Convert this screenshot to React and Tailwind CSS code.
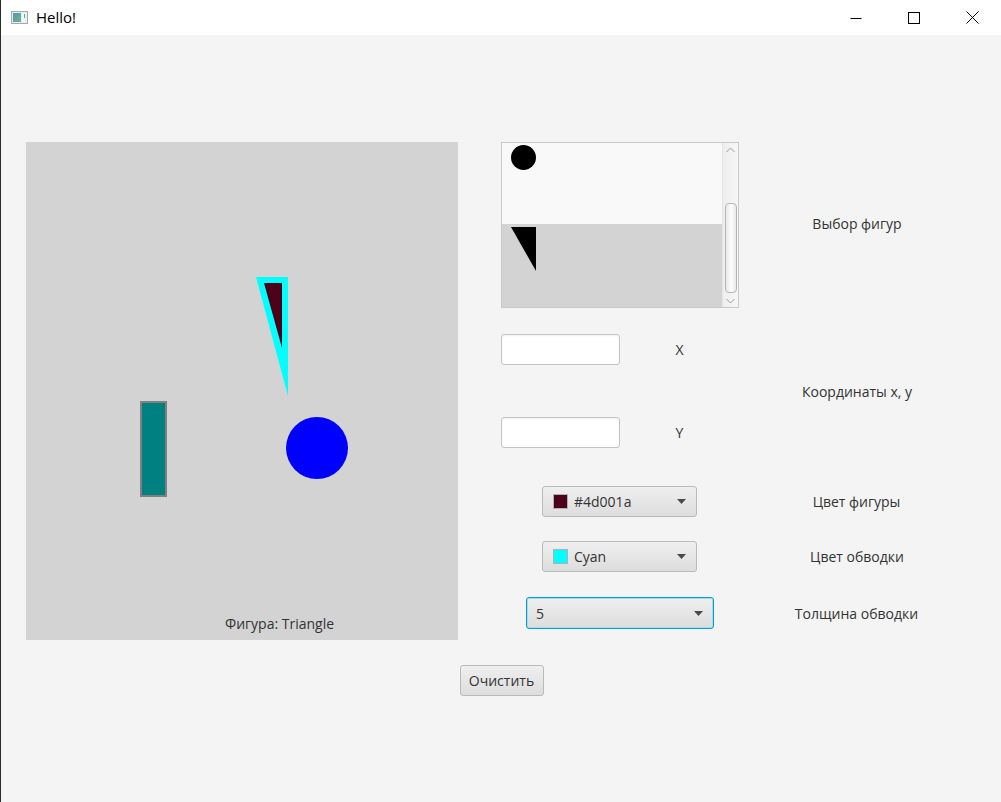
import React from 'react';

const font = "font-['Segoe_UI','Open_Sans','Noto_Sans',sans-serif]";

function TitleBar() {
  return (
    <header className="h-[35px] bg-white flex items-center shrink-0">
      {/* app icon */}
      <div className="ml-[10px] w-[17px] h-[13px] border border-[#a9a9a9] bg-[#e8ecec] flex p-[1px] gap-[1px]">
        <div className="w-[8px] h-full bg-gradient-to-br from-[#4f9bb0] to-[#6fb28f]" />
        <div className="flex-1 h-full bg-[#f4f6f6] flex justify-end">
          <div className="w-[1px] h-[4px] mt-[1px] mr-[1px] bg-[#5aa0a8]" />
        </div>
      </div>
      <span className="ml-[8px] text-[15px] text-black leading-none">Hello!</span>
      <div className="ml-auto flex h-full">
        <button className="w-[58px] h-full flex items-center justify-center">
          <svg width="12" height="12" viewBox="0 0 12 12"><path d="M0.5 6.5h11" stroke="#000" strokeWidth="1" /></svg>
        </button>
        <button className="w-[58px] h-full flex items-center justify-center">
          <svg width="12" height="12" viewBox="0 0 12 12"><rect x="0.5" y="0.5" width="11" height="11" fill="none" stroke="#000" strokeWidth="1" /></svg>
        </button>
        <button className="w-[58px] h-full flex items-center justify-center">
          <svg width="13" height="13" viewBox="0 0 13 13"><path d="M0.5 0.5l12 12M12.5 0.5l-12 12" stroke="#000" strokeWidth="1" /></svg>
        </button>
      </div>
    </header>
  );
}

function DrawCanvas() {
  return (
    <div className="relative w-[432px] h-[498px] bg-[#d3d3d3] flex flex-col justify-end shrink-0">
      <svg className="absolute inset-0" width="432" height="498" viewBox="0 0 432 498">
        <polygon points="230,135 262,135 262,254" fill="#00ffff" />
        <polygon points="238,141 256,141 256,206" fill="#4d001a" />
        <rect x="114" y="259" width="27" height="96" fill="#808080" />
        <rect x="116" y="261" width="23" height="92" fill="#008080" />
        <circle cx="291" cy="306" r="31" fill="#0000ff" />
      </svg>
      <p className="relative pl-[199px] pb-[6px] text-[14px] text-[#333]">Фигура: Triangle</p>
    </div>
  );
}

function ShapeList() {
  return (
    <div className="w-[238px] h-[166px] border border-[#c8c8c8] bg-[#f9f9f9] flex">
      <div className="flex-1 flex flex-col">
        <div className="h-[81px] bg-[#f9f9f9] pl-[9px] pt-[2px]">
          <div className="w-[25px] h-[25px] rounded-full bg-black" />
        </div>
        <div className="flex-1 bg-[#d3d3d3] pl-[9px] pt-[3px]">
          <svg width="26" height="44" viewBox="0 0 26 44"><polygon points="0,0 25,0 25,44" fill="#000" /></svg>
        </div>
      </div>
      {/* scrollbar */}
      <div className="w-[16px] bg-gradient-to-r from-[#eeeeee] to-[#f6f6f6] border-l border-[#e4e4e4] flex flex-col items-center">
        <svg className="mt-[4px]" width="9" height="6" viewBox="0 0 9 6"><path d="M0.5 5L4.5 1L8.5 5" stroke="#9a9a9a" fill="none" strokeWidth="1" /></svg>
        <div className="mt-[50px] w-[12px] h-[90px] rounded-[4px] border border-[#b6b6b6] bg-gradient-to-r from-[#e8e8e8] via-[#fdfdfd] to-[#e8e8e8]" />
        <svg className="mt-[5px]" width="9" height="6" viewBox="0 0 9 6"><path d="M0.5 1L4.5 5L8.5 1" stroke="#9a9a9a" fill="none" strokeWidth="1" /></svg>
      </div>
    </div>
  );
}

function TextField() {
  return (
    <input
      type="text"
      className="w-[119px] h-[31px] bg-white border border-[#c4c4c4] rounded-[3px] shadow-[inset_0_1px_2px_rgba(0,0,0,0.06)] outline-none"
    />
  );
}

function ColorCombo({ swatch, label }) {
  return (
    <div className="w-[155px] h-[31px] rounded-[3px] border border-[#bababa] bg-gradient-to-b from-[#efefef] to-[#dddddd] flex items-center pl-[10px] pr-[10px]">
      <span className={`w-[15px] h-[15px] border border-[#b0b0b0] ${swatch}`} />
      <span className="ml-[6px] text-[14px] text-[#333]">{label}</span>
      <svg className="ml-auto" width="9" height="5" viewBox="0 0 9 5"><polygon points="0,0 9,0 4.5,5" fill="#4a4a4a" /></svg>
    </div>
  );
}

export default function App() {
  return (
    <div className={`w-[1001px] h-[802px] bg-[#f4f4f4] border-l border-[#2b2b2b] flex flex-col overflow-hidden ${font}`}>
      <TitleBar />
      <main className="pt-[107px] pl-[25px] flex flex-col items-start">
        <div className="flex gap-[43px]">
          <DrawCanvas />

          <div className="flex flex-col w-[476px]">
            {/* shape choice */}
            <div className="flex items-center">
              <ShapeList />
              <p className="flex-1 text-center text-[14px] text-[#333] pb-[3px] pr-[2px]">Выбор фигур</p>
            </div>

            {/* coordinates */}
            <div className="flex items-center mt-[26px]">
              <div className="w-[238px] flex flex-col gap-[52px]">
                <div className="flex items-center">
                  <TextField />
                  <span className="flex-1 text-center text-[14px] text-[#333]">X</span>
                </div>
                <div className="flex items-center">
                  <TextField />
                  <span className="flex-1 text-center text-[14px] text-[#333]">Y</span>
                </div>
              </div>
              <p className="flex-1 text-center text-[14px] text-[#333] pr-[2px]">Координаты x, y</p>
            </div>

            {/* fill color */}
            <div className="flex items-center mt-[38px]">
              <div className="w-[238px] flex justify-center pr-[1px]">
                <ColorCombo swatch="bg-[#4d001a]" label="#4d001a" />
              </div>
              <p className="flex-1 text-center text-[14px] text-[#333] pr-[3px]">Цвет фигуры</p>
            </div>

            {/* stroke color */}
            <div className="flex items-center mt-[24px]">
              <div className="w-[238px] flex justify-center pr-[1px]">
                <ColorCombo swatch="bg-[#00ffff]" label="Cyan" />
              </div>
              <p className="flex-1 text-center text-[14px] text-[#333] pr-[2px]">Цвет обводки</p>
            </div>

            {/* stroke width */}
            <div className="flex items-center mt-[25px]">
              <div className="w-[238px] flex justify-center">
                <div className="w-[188px] h-[32px] rounded-[3px] border border-[#039ed3] shadow-[inset_0_0_0_1px_#a4dcef] bg-gradient-to-b from-[#efefef] to-[#dddddd] flex items-center pl-[9px] pr-[10px]">
                  <span className="text-[14px] text-[#333]">5</span>
                  <svg className="ml-auto" width="9" height="5" viewBox="0 0 9 5"><polygon points="0,0 9,0 4.5,5" fill="#4a4a4a" /></svg>
                </div>
              </div>
              <p className="flex-1 text-center text-[14px] text-[#333] pr-[3px]">Толщина обводки</p>
            </div>
          </div>
        </div>

        <div className="w-[951px] flex justify-center mt-[25px]">
          <button className="w-[84px] h-[31px] rounded-[3px] border border-[#bababa] bg-gradient-to-b from-[#efefef] to-[#dddddd] text-[14px] text-[#333]">
            Очистить
          </button>
        </div>
      </main>
    </div>
  );
}
